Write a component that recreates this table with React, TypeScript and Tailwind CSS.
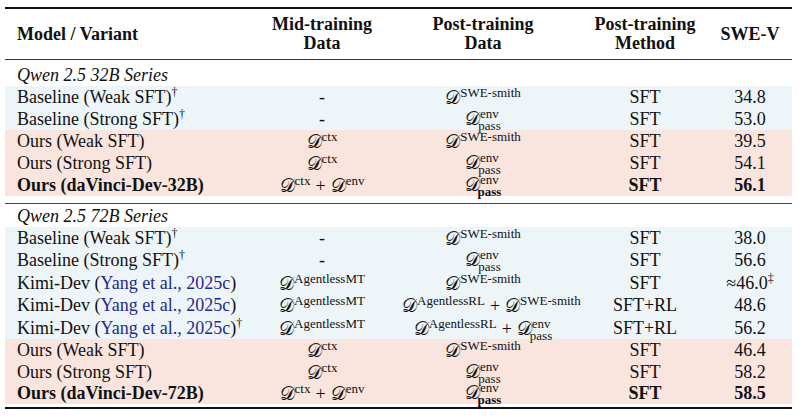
import React from 'react';

const cols = 'grid grid-cols-[237px_160px_162px_162px_66px]';

function D() {
  return <span className="font-normal text-[19px]">𝒟</span>;
}

function Sup({ t }: { t: string }) {
  return (
    <span className="whitespace-nowrap">
      <D />
      <span className="text-[13px] font-normal align-[7px] leading-none">{t}</span>
    </span>
  );
}

function EnvPass({ bold }: { bold?: boolean }) {
  return (
    <span className="whitespace-nowrap">
      <D />
      <span className="inline-flex flex-col items-center text-[13px] leading-[12px] align-[7px] -ml-[2px]">
        <span className="font-normal">env</span>
        <span className={bold ? 'font-bold' : 'font-normal'}>pass</span>
      </span>
    </span>
  );
}

function Plus() {
  return <span className="mx-[5px] font-normal">+</span>;
}

type Row = {
  model: React.ReactNode;
  mid: React.ReactNode;
  post: React.ReactNode;
  method: string;
  swe: React.ReactNode;
  bold?: boolean;
  h: string;
};

function Cite() {
  return <span className="text-[#1e2a8c]">Yang et al., 2025c</span>;
}

const dag = <span className="text-[12px] align-[7px] leading-none">†</span>;

const rows32: Row[] = [
  { model: <>Baseline (Weak SFT){dag}</>, mid: '-', post: <Sup t="SWE-smith" />, method: 'SFT', swe: '34.8', h: 'h-[22px]' },
  { model: <>Baseline (Strong SFT){dag}</>, mid: '-', post: <EnvPass />, method: 'SFT', swe: '53.0', h: 'h-[22px]' },
];
const ours32: Row[] = [
  { model: 'Ours (Weak SFT)', mid: <Sup t="ctx" />, post: <Sup t="SWE-smith" />, method: 'SFT', swe: '39.5', h: 'h-[22px]' },
  { model: 'Ours (Strong SFT)', mid: <Sup t="ctx" />, post: <EnvPass />, method: 'SFT', swe: '54.1', h: 'h-[22px]' },
  {
    model: 'Ours (daVinci-Dev-32B)',
    mid: <><Sup t="ctx" /><Plus /><Sup t="env" /></>,
    post: <EnvPass bold />,
    method: 'SFT',
    swe: '56.1',
    bold: true,
    h: 'h-[22px]',
  },
];
const rows72: Row[] = [
  { model: <>Baseline (Weak SFT){dag}</>, mid: '-', post: <Sup t="SWE-smith" />, method: 'SFT', swe: '38.0', h: 'h-[22px]' },
  { model: <>Baseline (Strong SFT){dag}</>, mid: '-', post: <EnvPass />, method: 'SFT', swe: '56.6', h: 'h-[23px]' },
  {
    model: <>Kimi-Dev (<Cite />)</>,
    mid: <Sup t="AgentlessMT" />,
    post: <Sup t="SWE-smith" />,
    method: 'SFT',
    swe: <>≈46.0<span className="text-[12px] align-[7px] leading-none">‡</span></>,
    h: 'h-[22px]',
  },
  {
    model: <>Kimi-Dev (<Cite />)</>,
    mid: <Sup t="AgentlessMT" />,
    post: <><Sup t="AgentlessRL" /><Plus /><Sup t="SWE-smith" /></>,
    method: 'SFT+RL',
    swe: '48.6',
    h: 'h-[23px]',
  },
  {
    model: <>Kimi-Dev (<Cite />){dag}</>,
    mid: <Sup t="AgentlessMT" />,
    post: <><Sup t="AgentlessRL" /><Plus /><EnvPass /></>,
    method: 'SFT+RL',
    swe: '56.2',
    h: 'h-[22px]',
  },
];
const ours72: Row[] = [
  { model: 'Ours (Weak SFT)', mid: <Sup t="ctx" />, post: <Sup t="SWE-smith" />, method: 'SFT', swe: '46.4', h: 'h-[22px]' },
  { model: 'Ours (Strong SFT)', mid: <Sup t="ctx" />, post: <EnvPass />, method: 'SFT', swe: '58.2', h: 'h-[21px]' },
  {
    model: 'Ours (daVinci-Dev-72B)',
    mid: <><Sup t="ctx" /><Plus /><Sup t="env" /></>,
    post: <EnvPass bold />,
    method: 'SFT',
    swe: '58.5',
    bold: true,
    h: 'h-[22px]',
  },
];

function TableRow({ r, bg }: { r: Row; bg: string }) {
  return (
    <div className={`${cols} ${r.h} ${bg} items-start leading-[22px]`}>
      <div className={`pl-3 whitespace-nowrap h-[22px] ${r.bold ? 'font-bold' : ''}`}>{r.model}</div>
      <div className="text-center whitespace-nowrap h-[22px]">{r.mid}</div>
      <div className="text-center whitespace-nowrap h-[22px]">{r.post}</div>
      <div className={`text-center h-[22px] ${r.bold ? 'font-bold' : ''}`}>{r.method}</div>
      <div className={`flex justify-center whitespace-nowrap h-[22px] pr-[18px] ${r.bold ? 'font-bold' : ''}`}>
        <span>{r.swe}</span>
      </div>
    </div>
  );
}

function Group({ title, base, ours, titleH }: { title: string; base: Row[]; ours: Row[]; titleH: string }) {
  return (
    <div>
      <div className={`${titleH} flex items-end pl-3 italic leading-[22px]`}>{title}</div>
      {base.map((r, i) => (
        <TableRow key={i} r={r} bg="bg-[#eef5f9]" />
      ))}
      {ours.map((r, i) => (
        <TableRow key={i} r={r} bg="bg-[#f9e5de]" />
      ))}
    </div>
  );
}

export default function App() {
  return (
    <div className="w-[799px] h-[417px] bg-white pt-[7px] pl-[5px] text-[18px] text-[#111] font-['Liberation_Serif','DejaVu_Serif',serif]">
      <div className="w-[787px]">
        <div className="border-t-2 border-[#111]" />
        <div className={`${cols} h-[51px] items-center border-b border-[#333] font-bold leading-[19px]`}>
          <div className="pl-3">Model / Variant</div>
          <div className="text-center">Mid-training<br />Data</div>
          <div className="text-center">Post-training<br />Data</div>
          <div className="text-center">Post-training<br />Method</div>
          <div className="flex justify-center whitespace-nowrap pr-[18px]">
            <span>SWE-V</span>
          </div>
        </div>
        <Group title="Qwen 2.5 32B Series" base={rows32} ours={ours32} titleH="h-[26px]" />
        <div className="h-[7px]" />
        <div className="border-t border-[#444]" />
        <Group title="Qwen 2.5 72B Series" base={rows72} ours={ours72} titleH="h-[23px]" />
        <div className="h-[3px]" />
        <div className="border-t-2 border-[#111]" />
      </div>
    </div>
  );
}
